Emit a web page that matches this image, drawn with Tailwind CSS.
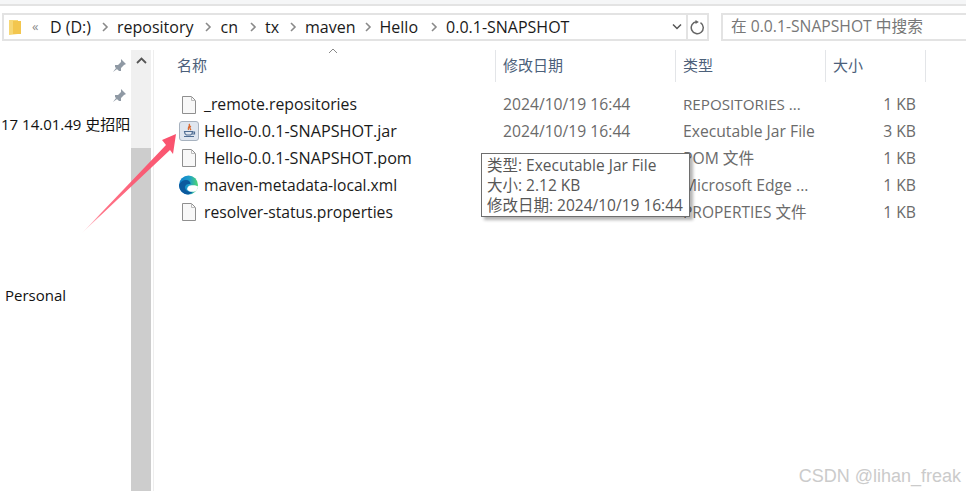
<!DOCTYPE html>
<html lang="zh-CN">
<head>
    <meta charset="UTF-8">
    <meta name="viewport" content="width=device-width, initial-scale=1.0">
    <title>0.0.1-SNAPSHOT</title>
    <script src="https://cdn.jsdelivr.net/npm/@tailwindcss/browser@4"></script>
</head>
<body class="bg-white overflow-hidden">
<div class="relative w-[966px] h-[491px] overflow-hidden flex flex-col bg-white text-[16px] text-[#1a1a1a] font-['Open_Sans','Noto_Sans_CJK_SC',sans-serif]">

    <!-- Ribbon remainder -->
    <div class="h-[6px] shrink-0 bg-[#f5f6f7] border-b-2 border-[#e3e3e3]"></div>

    <!-- Address bar + search -->
    <div class="h-[44px] shrink-0 flex items-start pt-[7px] pl-[2px]">
        <div class="w-[707px] h-[28px] border-2 border-[#e3e3e3] flex items-center">
            <svg class="ml-[5px] w-[14px] h-[18px]" viewBox="0 0 14 18">
                <path d="M0 2h9v14l-9 1z" fill="#f7d774"/>
                <path d="M4 3h8v13H4z" fill="#f3c64e"/>
            </svg>
            <span class="ml-[9px] text-[13px] text-[#8a8a8a] w-[18px]">«</span>
            <div class="flex items-center">
                <span class="w-[51px]">D (D:)</span>
                <svg class="w-[8px] h-[10px]" viewBox="0 0 8 10"><path d="M2 1l4 4-4 4" fill="none" stroke="#8a8a8a" stroke-width="1.6"/></svg>
                <span class="ml-[8px]">repository</span>
                <svg class="ml-[11px] w-[8px] h-[10px]" viewBox="0 0 8 10"><path d="M2 1l4 4-4 4" fill="none" stroke="#8a8a8a" stroke-width="1.6"/></svg>
                <span class="ml-[8px]">cn</span>
                <svg class="ml-[11px] w-[8px] h-[10px]" viewBox="0 0 8 10"><path d="M2 1l4 4-4 4" fill="none" stroke="#8a8a8a" stroke-width="1.6"/></svg>
                <span class="ml-[8px]">tx</span>
                <svg class="ml-[10px] w-[8px] h-[10px]" viewBox="0 0 8 10"><path d="M2 1l4 4-4 4" fill="none" stroke="#8a8a8a" stroke-width="1.6"/></svg>
                <span class="ml-[8px]">maven</span>
                <svg class="ml-[8px] w-[8px] h-[10px]" viewBox="0 0 8 10"><path d="M2 1l4 4-4 4" fill="none" stroke="#8a8a8a" stroke-width="1.6"/></svg>
                <span class="ml-[8px]">Hello</span>
                <svg class="ml-[12px] w-[8px] h-[10px]" viewBox="0 0 8 10"><path d="M2 1l4 4-4 4" fill="none" stroke="#8a8a8a" stroke-width="1.6"/></svg>
                <span class="ml-[8px]">0.0.1-SNAPSHOT</span>
            </div>
            <div class="ml-auto flex items-center h-full">
                <svg class="w-[10px] h-[8px] mr-[4px]" viewBox="0 0 10 8"><path d="M1 1.5l4 4 4-4" fill="none" stroke="#555" stroke-width="1.5"/></svg>
                <div class="w-[21px] h-full border-l-2 border-[#e3e3e3] flex items-center justify-center">
                    <svg class="w-[15px] h-[15px]" viewBox="0 0 15 15"><path d="M10.5 2.6a6 6 0 1 1-4-.9" fill="none" stroke="#666" stroke-width="1.5"/><path d="M5.5 0v4l3.4-2z" fill="#666"/></svg>
                </div>
            </div>
        </div>
        <div class="ml-[12px] flex-1 h-[28px] border-2 border-[#e3e3e3] border-r-0 flex items-center pl-[8px] text-[15.700px] text-[#777] whitespace-nowrap">在 0.0.1-SNAPSHOT 中搜索</div>
    </div>

    <!-- Body -->
    <div class="flex-1 flex min-h-0">
        <!-- Navigation pane -->
        <div class="w-[131px] shrink-0 overflow-hidden relative">
            <div class="flex flex-col items-end pr-[4px] pt-[8px] gap-[15px]">
                <svg class="w-[15px] h-[15px]" viewBox="0 0 15 15"><path d="M9 1l5 5-2 1-3 3 0 3-2 0-4-4 0-2 3 0 3-3z M4 10l-3 4 4-3z" fill="#8f99a4"/></svg>
                <svg class="w-[15px] h-[15px]" viewBox="0 0 15 15"><path d="M9 1l5 5-2 1-3 3 0 3-2 0-4-4 0-2 3 0 3-3z M4 10l-3 4 4-3z" fill="#8f99a4"/></svg>
            </div>
            <div class="mt-[10px] whitespace-nowrap text-[15px] ml-[1px] text-[#111]">17 14.01.49 史招阳</div>
            <div class="mt-[148px] ml-[5px] text-[15px] text-[#111]">Personal</div>
        </div>

        <!-- Scrollbar -->
        <div class="w-[20px] shrink-0 bg-[#f0f0f0] flex flex-col">
            <div class="h-[98px] pt-[7px] flex justify-center">
                <svg class="w-[11px] h-[7px]" viewBox="0 0 11 7"><path d="M1 6l4.500-4.500L10 6" fill="none" stroke="#555" stroke-width="1.8"/></svg>
            </div>
            <div class="flex-1 bg-[#cdcdcd]"></div>
        </div>

        <!-- File list -->
        <div class="flex-1 border-l border-[#eeeeee] ml-[2px] pl-[23px]">
            <div class="relative grid grid-cols-[318px_180px_150px_101px] h-[32px] text-[15px] text-[#4c607a]">
                <div class="pt-[4px] relative">名称
                    <svg class="absolute left-[151px] top-[-2px] w-[10px] h-[6px]" viewBox="0 0 10 6"><path d="M1 5l4-4 4 4" fill="none" stroke="#888"/></svg>
                </div>
                <div class="border-l border-[#e3e5e8] pl-[7px] pt-[4px]">修改日期</div>
                <div class="border-l border-[#e3e5e8] pl-[7px] pt-[4px]">类型</div>
                <div class="border-x border-[#e3e5e8] pl-[7px] pt-[4px]">大小</div>
            </div>

            <div class="mt-[9px] flex flex-col">
                <!-- row -->
                <div class="h-[27px] grid grid-cols-[326px_180px_160px_73px] items-center">
                    <div class="flex items-center whitespace-nowrap">
                        <svg class="w-[14px] h-[18px] ml-[5px] mr-[8px]" viewBox="0 0 14 18"><path d="M.5.5h9l4 4v13H.5z" fill="#f8f8f8" stroke="#8f8f8f"/><path d="M9.500.5v4h4" fill="none" stroke="#bbb"/></svg>
                        <span class="text-[15.800px]">_remote.repositories</span>
                    </div>
                    <div class="text-[15.700px] text-[#6b6b6b]">2024/10/19 16:44</div>
                    <div class="text-[15.200px] text-[#6b6b6b] whitespace-nowrap">REPOSITORIES ...</div>
                    <div class="text-[15.700px] text-[#6b6b6b] text-right">1 KB</div>
                </div>
                <div class="h-[27px] grid grid-cols-[326px_180px_160px_73px] items-center">
                    <div class="flex items-center whitespace-nowrap">
                        <svg class="w-[20px] h-[20px] ml-[2px] mr-[5px]" viewBox="0 0 20 20">
                            <rect x=".5" y=".5" width="19" height="19" rx="2.500" fill="#dfe6ef" stroke="#a7b2bf"/>
                            <path d="M10 3c2 2-2 3-.5 6M12 5c-2 1-1 3 0 4" fill="none" stroke="#d9642a" stroke-width="1.300"/>
                            <path d="M5.500 10.500h8c0 1.500-.5 3-2 3.500h-4c-1.500-.5-2-2-2-3.500zM5 15.500h10M13.500 11h2v2h-2" fill="none" stroke="#4e6d93" stroke-width="1.200"/>
                        </svg>
                        <span class="text-[16.200px]">Hello-0.0.1-SNAPSHOT.jar</span>
                    </div>
                    <div class="text-[15.700px] text-[#6b6b6b]">2024/10/19 16:44</div>
                    <div class="text-[15.700px] text-[#6b6b6b] whitespace-nowrap">Executable Jar File</div>
                    <div class="text-[15.700px] text-[#6b6b6b] text-right">3 KB</div>
                </div>
                <div class="h-[27px] grid grid-cols-[326px_180px_160px_73px] items-center">
                    <div class="flex items-center whitespace-nowrap">
                        <svg class="w-[14px] h-[18px] ml-[5px] mr-[8px]" viewBox="0 0 14 18"><path d="M.5.5h9l4 4v13H.5z" fill="#f8f8f8" stroke="#8f8f8f"/><path d="M9.500.5v4h4" fill="none" stroke="#bbb"/></svg>
                        <span class="text-[16.200px]">Hello-0.0.1-SNAPSHOT.pom</span>
                    </div>
                    <div class="text-[#6b6b6b]"></div>
                    <div class="text-[15.700px] text-[#6b6b6b] whitespace-nowrap">POM 文件</div>
                    <div class="text-[15.700px] text-[#6b6b6b] text-right">1 KB</div>
                </div>
                <div class="h-[27px] grid grid-cols-[326px_180px_160px_73px] items-center">
                    <div class="flex items-center whitespace-nowrap">
                        <svg class="w-[20px] h-[20px] ml-[1px] mr-[6px] shrink-0" viewBox="0 0 20 20">
                            <defs>
                                <linearGradient id="edgeTop" x1="0" y1="0.5" x2="1" y2="0.5"><stop offset="0" stop-color="#0f7fcc"/><stop offset="0.55" stop-color="#1f9fc9"/><stop offset="1" stop-color="#4fd86f"/></linearGradient>
                            </defs>
                            <circle cx="10.500" cy="10" r="9.500" fill="url(#edgeTop)"/>
                            <path d="M1 10c1-3 4-5 7-5 3 0 4.500 2 4.500 4-3-.5-6 1-5.500 4 .5 3 4 4.500 8 3.500-2 2-4 3-5 3-5 0-9-4.500-9-9.500z" fill="#0c5a9e"/>
                            <path d="M12 10.500c3-.5 6-.5 8 1-.5 3-2 4.500-3 5-2 .5-6 .5-7.500-1.500-1-1.500 .5-4 2.500-4.500z" fill="#fff"/>
                        </svg>
                        <span class="text-[15.600px]">maven-metadata-local.xml</span>
                    </div>
                    <div class="text-[#6b6b6b]"></div>
                    <div class="text-[15.700px] text-[#6b6b6b] whitespace-nowrap">Microsoft Edge ...</div>
                    <div class="text-[15.700px] text-[#6b6b6b] text-right">1 KB</div>
                </div>
                <div class="h-[27px] grid grid-cols-[326px_180px_160px_73px] items-center">
                    <div class="flex items-center whitespace-nowrap">
                        <svg class="w-[14px] h-[18px] ml-[5px] mr-[8px]" viewBox="0 0 14 18"><path d="M.5.5h9l4 4v13H.5z" fill="#f8f8f8" stroke="#8f8f8f"/><path d="M9.500.5v4h4" fill="none" stroke="#bbb"/></svg>
                        <span class="text-[15.700px]">resolver-status.properties</span>
                    </div>
                    <div class="text-[#6b6b6b]"></div>
                    <div class="text-[15.500px] text-[#6b6b6b] whitespace-nowrap">PROPERTIES 文件</div>
                    <div class="text-[15.700px] text-[#6b6b6b] text-right">1 KB</div>
                </div>
            </div>
        </div>
    </div>

    <!-- Tooltip -->
    <div class="absolute left-[481px] top-[153px] w-[209px] h-[64px] bg-white border border-[#6e6e6e] shadow-[3px_3px_3px_rgba(0,0,0,0.3)] pl-[5px] pt-[1px] text-[15.500px] leading-[20px] text-[#575757] whitespace-nowrap">
        <div>类型: Executable Jar File</div>
        <div>大小: 2.12 KB</div>
        <div>修改日期: 2024/10/19 16:44</div>
    </div>

    <!-- Annotation arrow -->
    <svg class="absolute left-[80px] top-[130px] w-[100px] h-[106px]" viewBox="0 0 100 106">
        <defs>
            <linearGradient id="arrowFade" x1="0" y1="1" x2="1" y2="0">
                <stop offset="0" stop-color="#ff5a72" stop-opacity="0.1"/>
                <stop offset="0.2" stop-color="#ff5a72" stop-opacity="0.85"/>
                <stop offset="1" stop-color="#f9506c"/>
            </linearGradient>
        </defs>
        <path d="M2 103L86 15 82 10 96 4 93 24 90 20z" fill="url(#arrowFade)"/>
    </svg>

    <!-- Watermark -->
    <div class="absolute right-[5px] top-[463px] text-[18px] text-[#cbcbcb] font-['Liberation_Sans',sans-serif]">CSDN @lihan_freak</div>
</div>
</body>
</html>
